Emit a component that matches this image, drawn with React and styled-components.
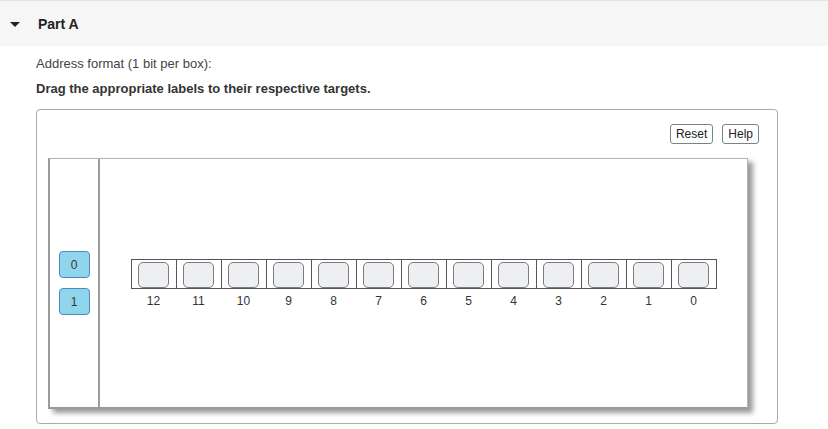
import React from "react";
import styled, { createGlobalStyle } from "styled-components";

const GlobalStyle = createGlobalStyle`
  body {
    margin: 0;
    background: #fff;
    font-family: "Liberation Sans", Arial, sans-serif;
  }
`;

const Header = styled.div`
  height: 46px;
  background: #f6f6f6;
  border-top: 1px solid #e4e4e4;
  box-sizing: border-box;
  display: flex;
  align-items: center;
  padding-left: 10px;
`;

const Caret = styled.span`
  width: 0;
  height: 0;
  border-left: 5px solid transparent;
  border-right: 5px solid transparent;
  border-top: 5px solid #222;
  margin-right: 18px;
  margin-top: 1px;
`;

const Title = styled.h2`
  margin: 0;
  font-size: 14px;
  font-weight: bold;
  color: #222;
`;

const Body = styled.div`
  padding: 10px 0 0 36px;
`;

const Para = styled.p`
  margin: 0 0 10px;
  font-size: 13px;
  line-height: 15px;
  color: ${(p) => (p.$strong ? "#333" : "#444")};
  font-weight: ${(p) => (p.$strong ? "bold" : "normal")};
`;

const Frame = styled.div`
  margin-top: 13px;
  width: 742px;
  height: 315px;
  box-sizing: border-box;
  border: 1px solid #aaa;
  border-radius: 4px;
  padding: 14px 18px 0 11px;
`;

const Toolbar = styled.div`
  display: flex;
  justify-content: flex-end;
  gap: 9px;
`;

const ToolButton = styled.button`
  height: 20px;
  padding: 0 5px;
  background: #fff;
  border: 1px solid #74868a;
  border-radius: 3px;
  font-family: "Liberation Sans", Arial, sans-serif;
  font-size: 12px;
  color: #222;
  cursor: pointer;
`;

const Canvas = styled.div`
  margin-top: 14px;
  width: 700px;
  height: 251px;
  box-sizing: border-box;
  border: 1px solid #b4b4b4;
  border-left: 2px solid #9a9a9a;
  border-bottom: 2px solid #999;
  box-shadow: 5px 4px 5px rgba(0, 0, 0, 0.4);
  display: flex;
  background: #fff;
`;

const Palette = styled.div`
  width: 48px;
  border-right: 2px solid #9c9c9c;
  display: flex;
  flex-direction: column;
  align-items: center;
  justify-content: center;
  gap: 10px;
`;

const Tile = styled.div`
  width: 31px;
  height: 27px;
  box-sizing: border-box;
  background: #8fd6ec;
  border: 1px solid #4f86c6;
  border-radius: 4px;
  display: flex;
  align-items: center;
  justify-content: center;
  font-size: 12px;
  color: #333;
  cursor: grab;
`;

const Stage = styled.div`
  flex: 1;
  display: flex;
  flex-direction: column;
  align-items: center;
  justify-content: center;
`;

const Slots = styled.div`
  display: flex;
  border: 1px solid #555;
  border-left: none;
`;

const Cell = styled.div`
  width: 44px;
  height: 28px;
  border-left: 1px solid #555;
  display: flex;
  justify-content: center;
  align-items: flex-end;
`;

const Target = styled.div`
  width: 31px;
  height: 26px;
  box-sizing: border-box;
  background: #eeeff0;
  border: 1.5px solid #7b7b88;
  border-radius: 5px;
`;

const Indexes = styled.div`
  display: flex;
  margin-top: 5px;
`;

const Index = styled.span`
  width: 45px;
  text-align: center;
  font-size: 12px;
  line-height: 14px;
  color: #333;
`;

const bits = Array.from({ length: 13 }, (_, i) => 12 - i);

export default function App() {
  return (
    <>
      <GlobalStyle />
      <Header>
        <Caret />
        <Title>Part A</Title>
      </Header>
      <Body>
        <Para>Address format (1 bit per box):</Para>
        <Para $strong>Drag the appropriate labels to their respective targets.</Para>
        <Frame>
          <Toolbar>
            <ToolButton>Reset</ToolButton>
            <ToolButton>Help</ToolButton>
          </Toolbar>
          <Canvas>
            <Palette>
              <Tile>0</Tile>
              <Tile>1</Tile>
            </Palette>
            <Stage>
              <Slots>
                {bits.map((b) => (
                  <Cell key={b}>
                    <Target />
                  </Cell>
                ))}
              </Slots>
              <Indexes>
                {bits.map((b) => (
                  <Index key={b}>{b}</Index>
                ))}
              </Indexes>
            </Stage>
          </Canvas>
        </Frame>
      </Body>
    </>
  );
}
